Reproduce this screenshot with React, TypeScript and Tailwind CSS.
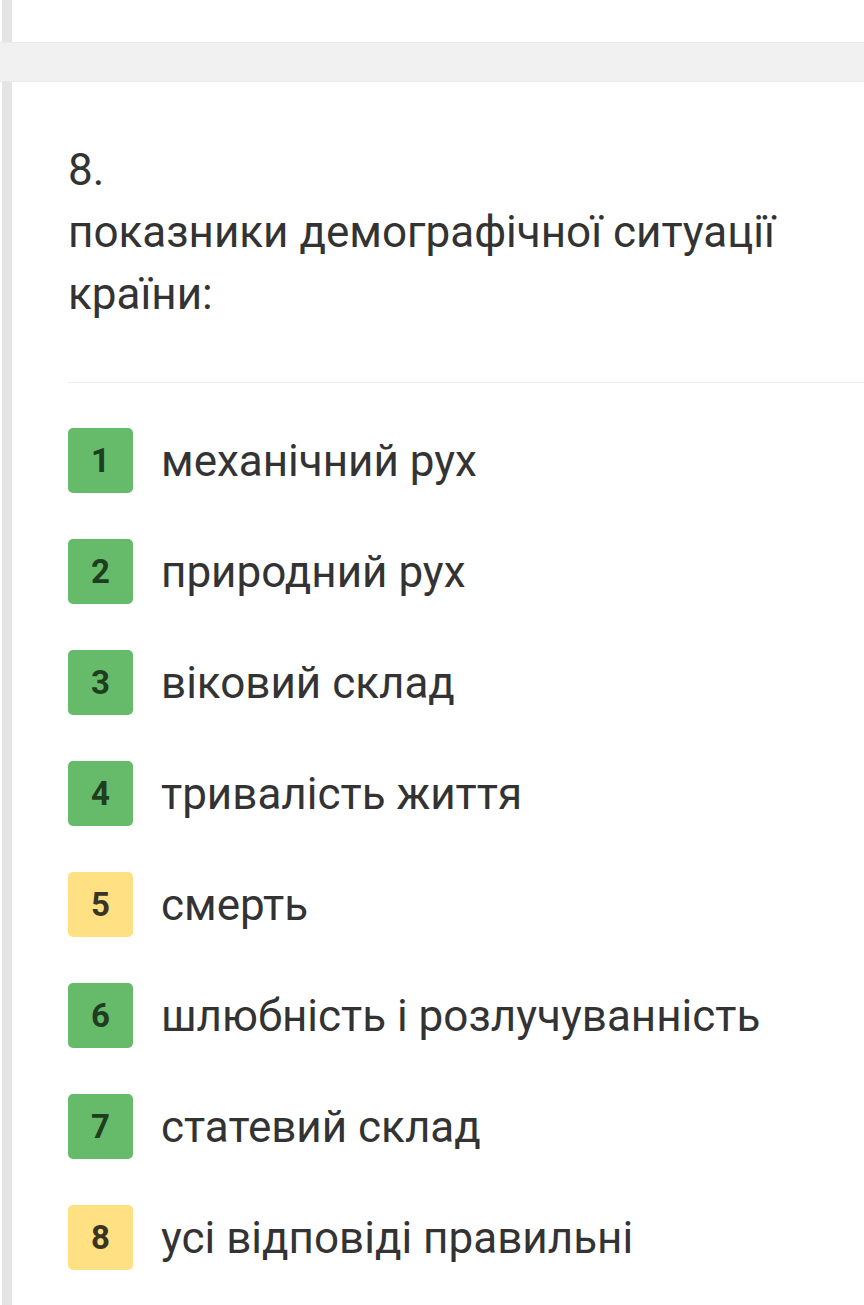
const items: { n: number; text: string; ok: boolean }[] = [
    { n: 1, text: 'механічний рух', ok: true },
    { n: 2, text: 'природний рух', ok: true },
    { n: 3, text: 'віковий склад', ok: true },
    { n: 4, text: 'тривалість життя', ok: true },
    { n: 5, text: 'смерть', ok: false },
    { n: 6, text: 'шлюбність і розлучуванність', ok: true },
    { n: 7, text: 'статевий склад', ok: true },
    { n: 8, text: 'усі відповіді правильні', ok: false },
];

export default function App() {
    return (
        <div className="flex min-h-screen flex-col bg-white font-['Roboto',sans-serif] text-[#333]">
            <div className="flex h-[42px]">
                <div className="ml-[2px] w-[10px] bg-[#e4e4e4]" />
                <div className="flex-1 bg-white" />
            </div>

            <div className="h-[40px] border-y border-[#e9e9e9] bg-[#f1f1f1]" />

            <div className="flex flex-1">
                <div className="ml-[2px] w-[10px] shrink-0 bg-[#e4e4e4]" />
                <div className="flex-1 pt-[57px] pl-[56px]">
                    <div className="pr-[40px] text-[44px] leading-[62px]">
                        <div>8.</div>
                        <div>показники демографічної ситуації країни:</div>
                    </div>

                    <div className="mt-[57px] border-t border-[#ececec]" />

                    <ul className="flex flex-col gap-[46px] pt-[45px]">
                        {items.map((item) => (
                            <li key={item.n} className="flex items-center">
                                <span
                                    className={
                                        item.ok
                                            ? 'flex h-[65px] w-[65px] items-center justify-center rounded-[5px] bg-[#66bb6a] text-[33px] font-bold text-[#1f3d20]'
                                            : 'flex h-[65px] w-[65px] items-center justify-center rounded-[5px] bg-[#ffe082] text-[33px] font-bold text-[#3a3424]'
                                    }
                                >
                                    {item.n}
                                </span>
                                <span className="ml-[28px] text-[44px] leading-none">
                                    {item.text}
                                </span>
                            </li>
                        ))}
                    </ul>
                </div>
            </div>
        </div>
    );
}
